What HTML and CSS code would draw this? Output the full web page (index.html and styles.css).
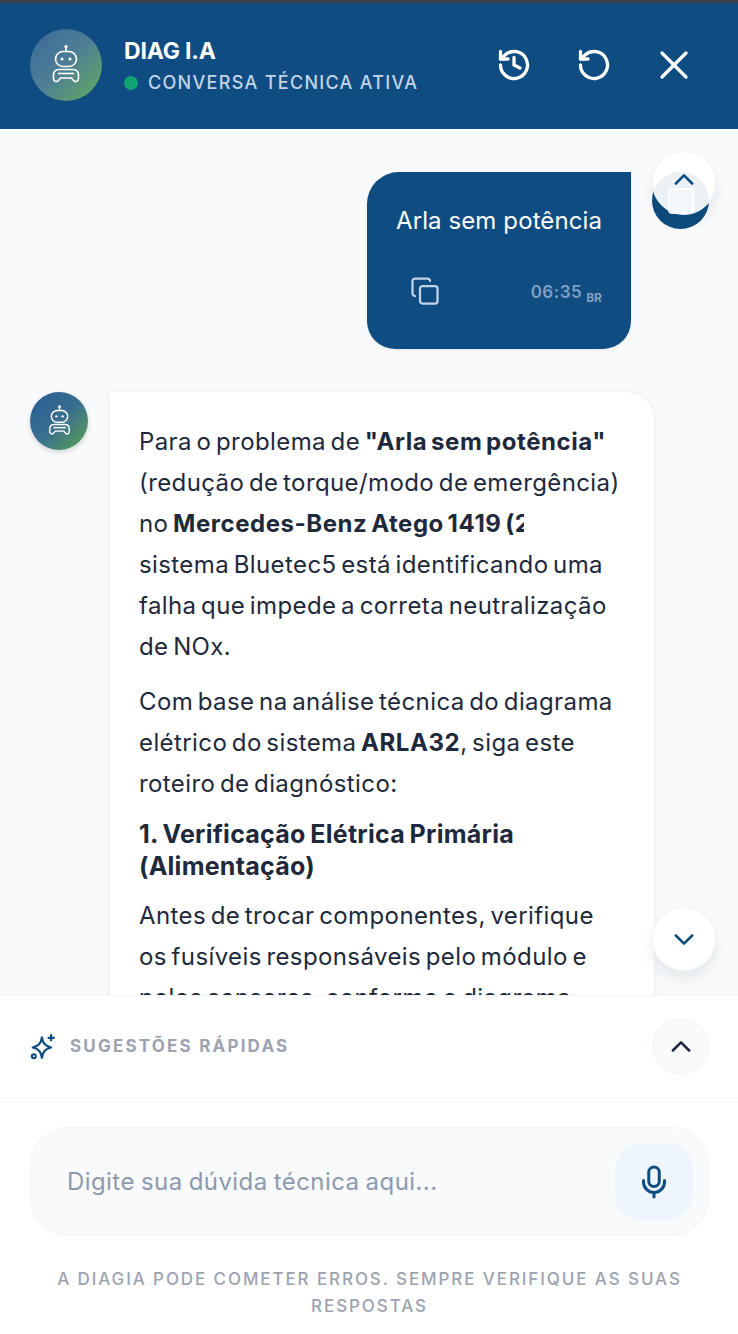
FILE: index.html
```html
<!DOCTYPE html>
<html lang="pt-BR">

<head>
  <meta charset="UTF-8">
  <meta name="viewport" content="width=device-width, initial-scale=1.0">
  <title>DIAG I.A</title>
  <link rel="stylesheet" href="styles.css">
</head>

<body>
  <div class="app">
    <header class="topbar">
      <div class="avatar avatar-large">
        <svg class="robot" viewBox="0 0 32 40" fill="none" stroke="currentColor" stroke-width="1.6">
          <path d="M16 1v5" />
          <circle cx="16" cy="1.6" r="0.9" fill="currentColor" />
          <rect x="5.5" y="6.5" width="21" height="15" rx="7.5" />
          <circle cx="12" cy="14" r="1.5" fill="currentColor" stroke="none" />
          <circle cx="20" cy="14" r="1.5" fill="currentColor" stroke="none" />
          <path d="M9 24.5h14c3 0 5.5 2 5.5 6v3c0 3-3 4-5 2l-2-2.500H10.500l-2 2.500c-2 2-5 1-5-2v-3c0-4 2.500-6 5.500-6z" />
          <path d="M8 28.500h16" />
        </svg>
      </div>
      <div class="topbar-title">
        <h1>DIAG I.A</h1>
        <p class="status"><span class="status-dot"></span>CONVERSA TÉCNICA ATIVA</p>
      </div>
      <div class="topbar-actions">
        <svg class="icon" viewBox="0 0 24 24">
          <path d="M3 12a9 9 0 1 0 3-6.700L3 8" />
          <path d="M3 3v5h5" />
          <path d="M12 7v5l4 2" />
        </svg>
        <svg class="icon" viewBox="0 0 24 24">
          <path d="M3 12a9 9 0 1 0 3-6.700L3 8" />
          <path d="M3 3v5h5" />
        </svg>
        <svg class="icon" viewBox="0 0 24 24">
          <path d="M20 4 4 20" />
          <path d="m4 4 16 16" />
        </svg>
      </div>
    </header>

    <main class="chat">
      <section class="msg msg-user">
        <div class="bubble-user">
          <p class="bubble-user-text">Arla sem potência</p>
          <div class="bubble-user-meta">
            <svg class="copy" viewBox="0 0 24 24">
              <rect x="8" y="8" width="14" height="14" rx="2" />
              <path d="M4 16c-1.100 0-2-.9-2-2V4c0-1.100.9-2 2-2h10c1.100 0 2 .9 2 2" />
            </svg>
            <span class="time">06:35<small>BR</small></span>
          </div>
        </div>
        <div class="avatar avatar-user"><span class="avatar-user-box"></span></div>
      </section>

      <section class="msg msg-bot">
        <div class="avatar avatar-bot">
          <svg class="robot" viewBox="0 0 32 40" fill="none" stroke="currentColor" stroke-width="1.8">
            <path d="M16 1v5" />
            <circle cx="16" cy="1.6" r="0.9" fill="currentColor" />
            <rect x="5.500" y="6.500" width="21" height="15" rx="7.500" />
            <circle cx="12" cy="14" r="1.500" fill="currentColor" stroke="none" />
            <circle cx="20" cy="14" r="1.500" fill="currentColor" stroke="none" />
            <path d="M9 24.500h14c3 0 5.500 2 5.500 6v3c0 3-3 4-5 2l-2-2.500H10.500l-2 2.500c-2 2-5 1-5-2v-3c0-4 2.500-6 5.500-6z" />
            <path d="M8 28.500h16" />
          </svg>
        </div>
        <article class="bubble-bot">
          <p>Para o problema de <strong>"Arla sem potência"</strong> (redução de torque/modo de emergência) no <strong class="clipped">Mercedes-Benz Atego 1419 (2</strong><br>sistema Bluetec5 está identificando uma falha que impede a correta neutralização<br>de NOx.</p>
          <p>Com base na análise técnica do diagrama elétrico do sistema <strong>ARLA32</strong>, siga este roteiro de diagnóstico:</p>
          <h3>1. Verificação Elétrica Primária (Alimentação)</h3>
          <p>Antes de trocar componentes, verifique<br>os fusíveis responsáveis pelo módulo e<br>pelos sensores, conforme o diagrama.</p>
        </article>
      </section>

      <button class="scroll-btn scroll-up">
        <svg viewBox="0 0 24 24"><path d="m5 15 7-7 7 7" /></svg>
      </button>
      <button class="scroll-btn scroll-down">
        <svg viewBox="0 0 24 24"><path d="m5 9 7 7 7-7" /></svg>
      </button>
    </main>

    <footer class="composer">
      <div class="suggestions">
        <svg class="sparkle" viewBox="0 0 24 24">
          <path d="M11 3c.8 5.500 2.800 8 8.500 9.500-5.700 1.500-7.700 4-8.500 9.500-.8-5.500-2.800-8-8.500-9.500C8.200 11 10.200 8.500 11 3z" />
          <path d="M19.500 1v5" />
          <path d="M17 3.500h5" />
          <circle cx="3.500" cy="20.500" r="1.800" />
        </svg>
        <span class="suggestions-label">SUGESTÕES RÁPIDAS</span>
        <button class="suggestions-toggle">
          <svg viewBox="0 0 24 24"><path d="m5 15 7-7 7 7" /></svg>
        </button>
      </div>
      <div class="input-area">
        <div class="input-box">
          <span class="placeholder">Digite sua dúvida técnica aqui...</span>
          <button class="mic">
            <svg viewBox="0 0 24 24">
              <rect x="8.500" y="2" width="7" height="13" rx="3.500" />
              <path d="M5 11v1a7 7 0 0 0 14 0v-1" />
              <path d="M12 19v3" />
            </svg>
          </button>
        </div>
        <p class="disclaimer">A DIAGIA PODE COMETER ERROS. SEMPRE VERIFIQUE AS SUAS RESPOSTAS</p>
      </div>
    </footer>
  </div>
</body>

</html>
```

FILE: styles.css
```css
*,
*::before,
*::after {
  box-sizing: border-box;
  margin: 0;
  padding: 0;
}

:root {
  --blue: #0f4c81;
  --ink: #1e293b;
  --page: #f8fafc;
  --line: #f1f5f9;
  --ff: 'Inter', 'Noto Sans', sans-serif;
}

html,
body {
  height: 100%;
  overflow: hidden;
}

body {
  background-color: #fff;
  font-family: var(--ff);
}

button {
  border: none;
  background: none;
  font: inherit;
}

.app {
  display: flex;
  flex-direction: column;
  height: 1334px;
  border-top: 3px solid #3b4048;
}

/* HEADER */
.topbar {
  display: flex;
  align-items: center;
  flex: none;
  height: 126px;
  padding: 0 46px 2px 30px;
  background-color: var(--blue);
  color: #fff;
}

.avatar {
  display: grid;
  place-items: center;
  flex: none;
  border-radius: 50%;
  color: #fff;
}

.avatar-large {
  width: 72px;
  height: 72px;
  background: linear-gradient(135deg, #38689a 0%, #4f7f95 50%, #63ad5b 100%);
}

.avatar-large .robot {
  width: 32px;
  height: 42px;
}

.topbar-title {
  flex: 1;
  margin-left: 22px;
}

.topbar-title h1 {
  margin-top: 1px;
  font-size: 23px;
  line-height: 28px;
  font-weight: 700;
  letter-spacing: -0.2px;
}

.status {
  display: flex;
  align-items: center;
  margin-top: 6px;
  color: #c3d4e8;
  font-size: 18px;
  line-height: 24px;
  font-weight: 500;
  letter-spacing: 1.3px;
}

.status-dot {
  width: 14px;
  height: 14px;
  margin-right: 10px;
  border-radius: 50%;
  background-color: #10a374;
}

.topbar-actions {
  display: flex;
  align-items: center;
  gap: 44px;
}

.icon {
  width: 36px;
  height: 36px;
  fill: none;
  stroke: #fff;
  stroke-width: 2.200;
  stroke-linecap: round;
  stroke-linejoin: round;
}

/* CHAT */
.chat {
  position: relative;
  flex: 1;
  min-height: 0;
  overflow: hidden;
  padding: 43px 0 0 30px;
  background-color: var(--page);
}

.msg {
  display: flex;
}

.msg-user {
  justify-content: flex-end;
  align-items: flex-start;
  gap: 21px;
  padding-right: 29px;
  margin-bottom: 43px;
}

.bubble-user {
  width: 264px;
  height: 177px;
  padding: 32px 29px 0;
  border-radius: 32px 0 28px 28px;
  background-color: var(--blue);
  box-shadow: 0 1px 3px rgba(15, 23, 42, 0.08);
  color: #fff;
}

.bubble-user-text {
  font-size: 24px;
  line-height: 34px;
  letter-spacing: 0.1px;
  white-space: nowrap;
}

.bubble-user-meta {
  display: flex;
  justify-content: space-between;
  align-items: center;
  margin-top: 38px;
}

.copy {
  width: 30px;
  height: 30px;
  margin-left: 14px;
  fill: none;
  stroke: #c3d4e8;
  stroke-width: 1.800;
  stroke-linecap: round;
  stroke-linejoin: round;
}

.time {
  margin-top: 5px;
  color: #7fa0c2;
  font-size: 17px;
  font-weight: 600;
  letter-spacing: 0.5px;
}

.time small {
  margin-left: 4px;
  font-size: 12px;
  font-weight: 700;
  letter-spacing: 0;
  vertical-align: -4px;
}

.avatar-user {
  width: 57px;
  height: 57px;
  background-color: var(--blue);
}

.avatar-user-box {
  width: 26px;
  height: 26px;
  border: 2px solid #f8fafc;
  border-radius: 4px;
  background-color: rgba(255, 255, 255, 0.4);
}

.msg-bot {
  align-items: flex-start;
  gap: 22px;
}

.avatar-bot {
  width: 58px;
  height: 58px;
  background: linear-gradient(135deg, #245c95 0%, #3a6f8f 50%, #5ba24f 100%);
  box-shadow: 0 2px 5px rgba(15, 23, 42, 0.18);
}

.avatar-bot .robot {
  width: 25px;
  height: 32px;
}

.bubble-bot {
  width: 544px;
  padding: 29px 29px 0;
  border-radius: 0 28px 0 0;
  background-color: #fff;
  box-shadow: 0 1px 6px rgba(15, 23, 42, 0.07);
  color: var(--ink);
  font-size: 24px;
  line-height: 41px;
  letter-spacing: 0.4px;
  word-spacing: -2.500px;
}

.bubble-bot p {
  margin-bottom: 14px;
}

.bubble-bot strong {
  font-weight: 700;
  letter-spacing: 0.55px;
}

.clipped {
  display: inline-block;
  max-width: 351px;
  overflow: hidden;
  vertical-align: bottom;
  white-space: nowrap;
}

.bubble-bot h3 {
  margin: 14px 0 13px;
  font-size: 25px;
  line-height: 32px;
  font-weight: 700;
  letter-spacing: 0.25px;
  word-spacing: -1.500px;
}

.scroll-btn {
  position: absolute;
  display: grid;
  place-items: center;
  width: 64px;
  height: 64px;
  border: 1px solid var(--line);
  border-radius: 50%;
  background-color: rgba(255, 255, 255, 0.92);
  box-shadow: 0 8px 14px rgba(15, 23, 42, 0.08);
}

.scroll-btn svg,
.suggestions-toggle svg {
  width: 28px;
  height: 28px;
  fill: none;
  stroke: var(--blue);
  stroke-width: 2.200;
  stroke-linecap: round;
  stroke-linejoin: round;
}

.scroll-up {
  top: 22px;
  right: 22px;
  padding-bottom: 6px;
}

.scroll-down {
  top: 778px;
  right: 22px;
}

/* FOOTER */
.composer {
  position: relative;
  flex: none;
  height: 339px;
  background-color: #fff;
  border-top: 1px solid var(--line);
}

.suggestions {
  display: flex;
  align-items: center;
  height: 102px;
  padding: 0 29px 0 30px;
  border-bottom: 1px solid var(--line);
}

.sparkle {
  width: 26px;
  height: 26px;
  fill: none;
  stroke: var(--blue);
  stroke-width: 2;
  stroke-linecap: round;
  stroke-linejoin: round;
}

.suggestions-label {
  flex: 1;
  margin-left: 14px;
  padding-bottom: 2px;
  color: #9ca3af;
  font-size: 17px;
  font-weight: 700;
  letter-spacing: 2.200px;
}

.suggestions-toggle {
  display: grid;
  place-items: center;
  width: 57px;
  height: 57px;
  border: 1px solid var(--line);
  border-radius: 50%;
  background-color: var(--page);
}

.suggestions-toggle svg {
  stroke: var(--ink);
}

.input-area {
  padding: 29px 29px 0 30px;
}

.input-box {
  display: flex;
  align-items: center;
  justify-content: space-between;
  height: 109px;
  padding: 0 15px 0 36px;
  border: 1px solid var(--line);
  border-radius: 38px;
  background-color: var(--page);
}

.placeholder {
  color: #8d99ae;
  font-size: 24px;
  letter-spacing: 0.42px;
  word-spacing: -1px;
}

.mic {
  display: grid;
  place-items: center;
  width: 78px;
  height: 77px;
  border-radius: 26px;
  background-color: #eef5fd;
}

.mic svg {
  width: 36px;
  height: 38px;
  fill: none;
  stroke: var(--blue);
  stroke-width: 2;
  stroke-linecap: round;
  stroke-linejoin: round;
}

.disclaimer {
  margin: 30px 15px 0;
  color: #9ca3af;
  font-size: 17px;
  line-height: 27px;
  font-weight: 500;
  letter-spacing: 1.900px;
  text-align: center;
}
```
